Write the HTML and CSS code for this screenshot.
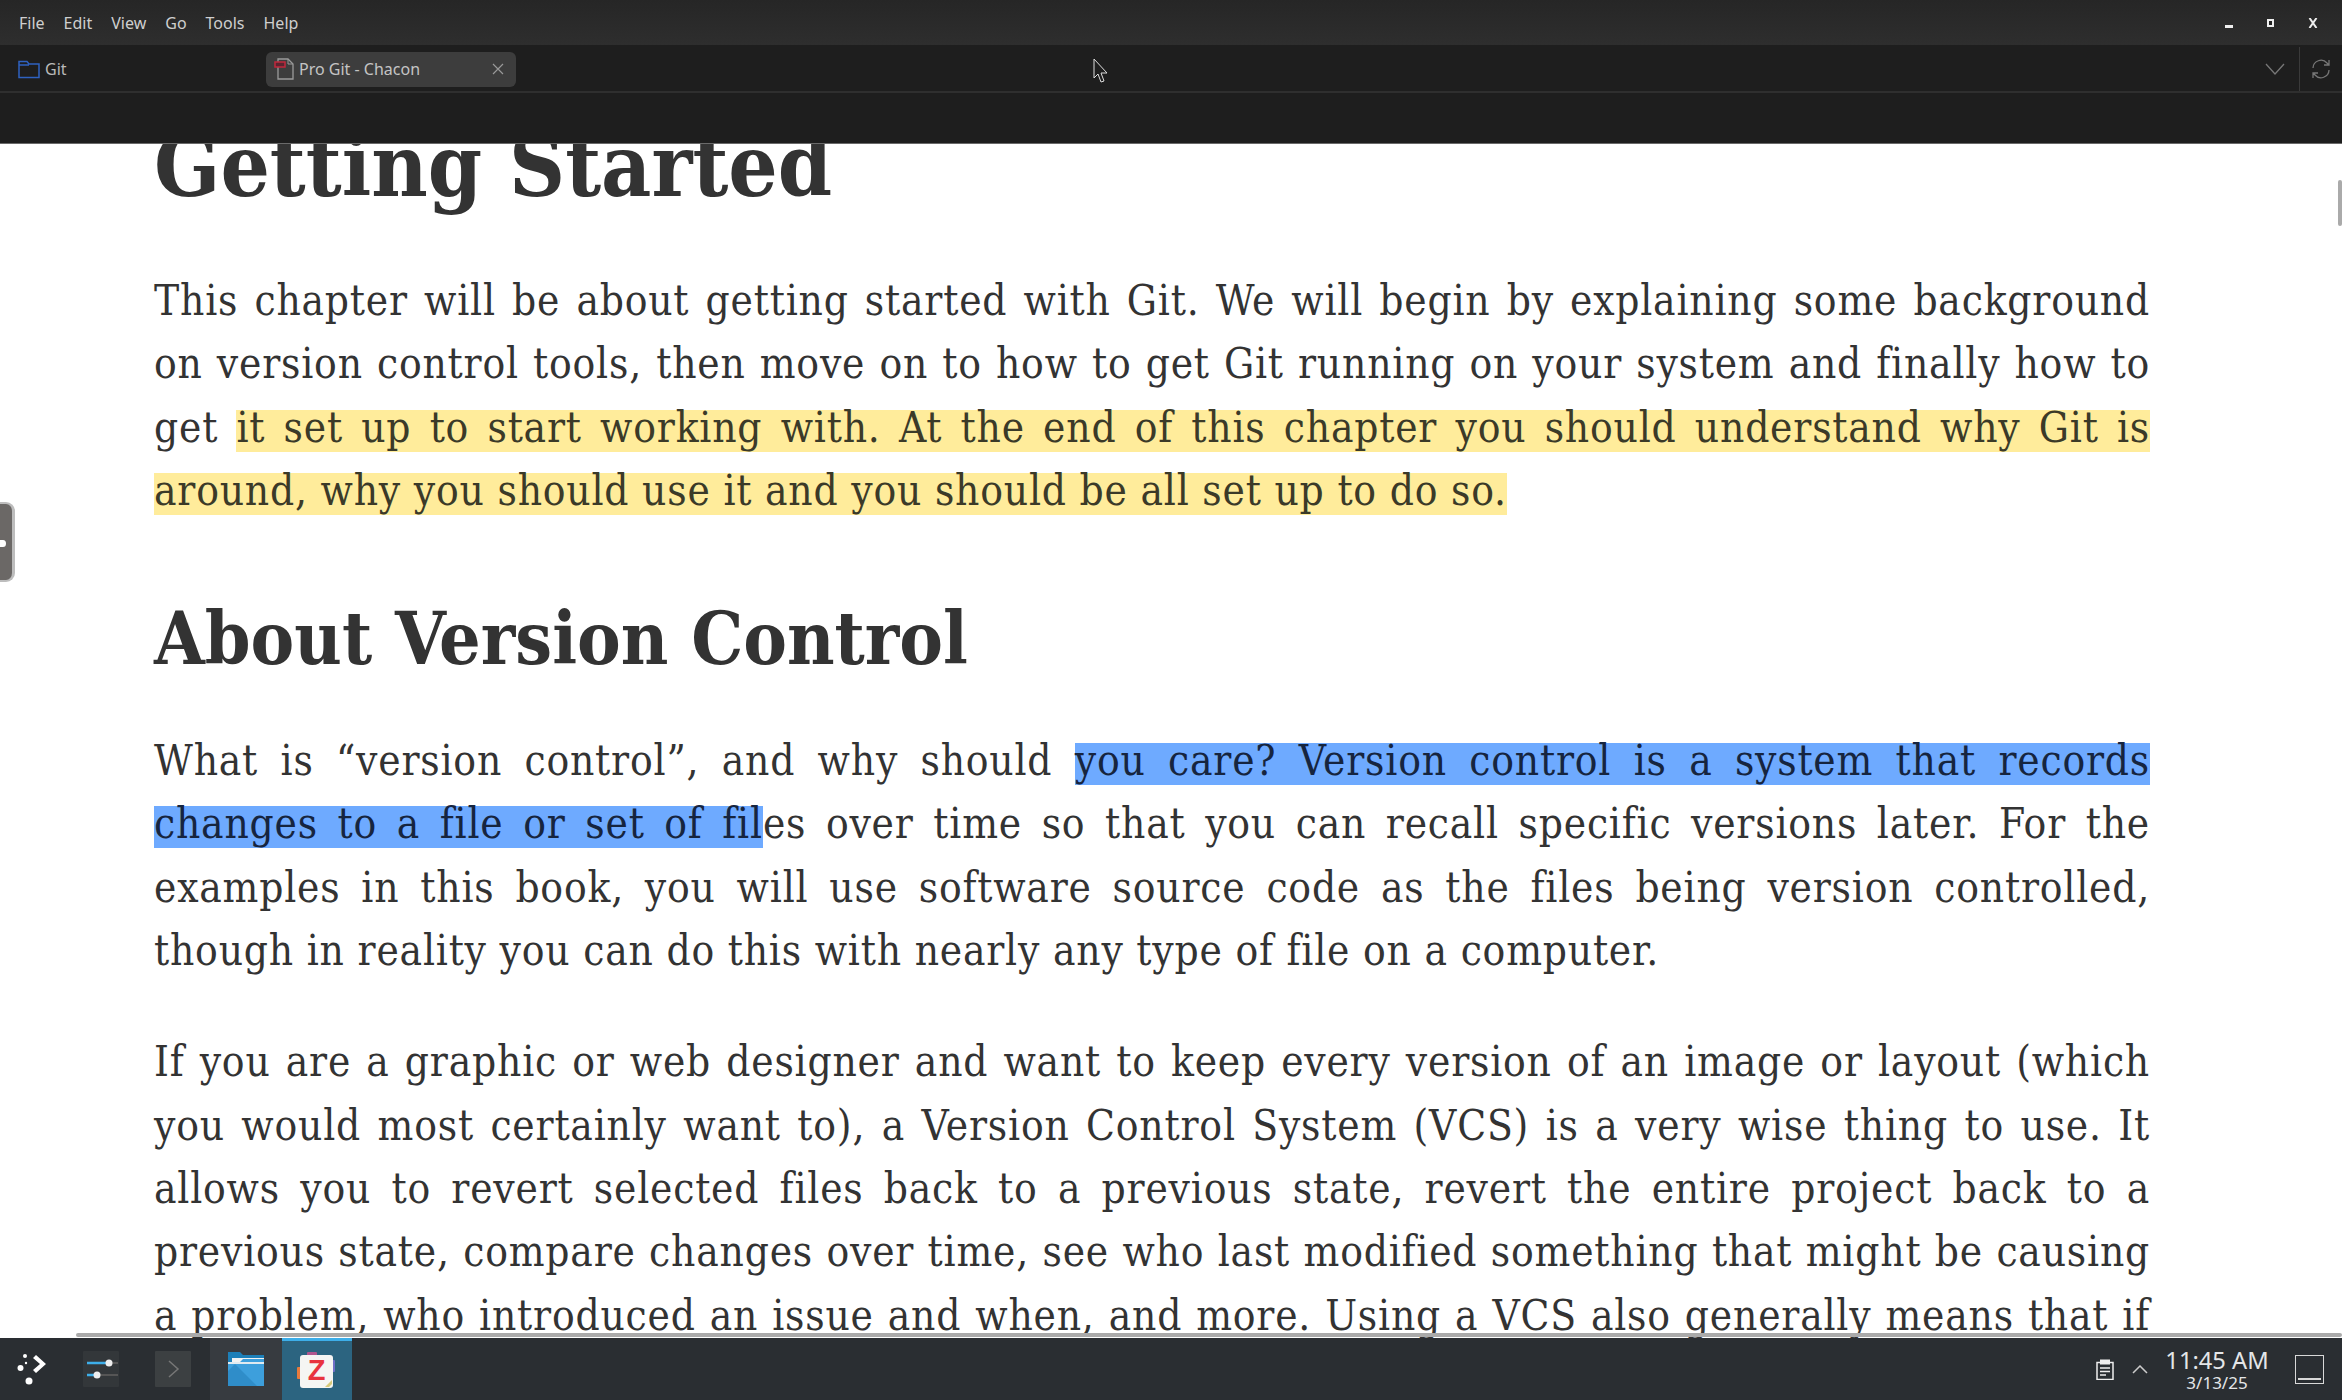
FILE: index.html
```html
<!DOCTYPE html>
<html lang="en">
<head>
    <meta charset="UTF-8">
    <title>Pro Git - Chacon</title>
    <link rel="stylesheet" href="styles.css">
</head>
<body>
    <div class="window">
        <!-- Menu bar -->
        <div class="title-bar">
            <nav class="menu">
                <span>File</span><span>Edit</span><span>View</span><span>Go</span><span>Tools</span><span>Help</span>
            </nav>
            <div class="win-controls">
                <i class="win-min"></i>
                <i class="win-max"></i>
                <svg width="10" height="10" viewBox="0 0 10 10"><path d="M1.5 0l7 10M8.5 0l-7 10" stroke="#eee" stroke-width="2" fill="none"/></svg>
            </div>
        </div>

        <!-- Tabs -->
        <div class="tab-bar">
            <div class="tab tab-library">
                <svg width="22" height="20" viewBox="0 0 22 20"><path d="M1 18.500V2.500h8l2 2.500h10v13.500zM1 6h10" stroke="#2f62c0" stroke-width="1.500" fill="none"/></svg>
                <span>Git</span>
            </div>
            <div class="tab tab-active">
                <svg width="20" height="22" viewBox="0 0 20 22"><path d="M4 1h10l5 5v15H4z" stroke="#9a9a9a" stroke-width="1.300" fill="none"/><path d="M14 1v5h5" stroke="#9a9a9a" fill="none"/><rect x="1" y="4" width="10" height="5" fill="#5a2530" stroke="#c0283c" stroke-width="1.500"/></svg>
                <span class="tab-title">Pro Git - Chacon</span>
                <svg class="tab-close" width="12" height="12" viewBox="0 0 12 12"><path d="M1 1l10 10M11 1L1 11" stroke="#999" stroke-width="1.200"/></svg>
            </div>
            <div class="tab-tools">
                <svg width="20" height="12" viewBox="0 0 20 12"><path d="M1 1l9 10 9-10" stroke="#777" stroke-width="1.300" fill="none"/></svg>
                <div class="tab-sync">
                    <svg width="20" height="20" viewBox="0 0 20 20"><path d="M2 9a8 8 0 0 1 14-5l2 2M18 11a8 8 0 0 1-14 5l-2-2M18 1v5h-5M2 19v-5h5" stroke="#777" stroke-width="1.300" fill="none"/></svg>
                </div>
            </div>
        </div>

        <div class="toolbar"></div>

        <!-- Reader -->
        <main class="reader">
            <article class="page">
                <h1>Getting Started</h1>
                <p>
                    <span class="line">This chapter will be about getting started with Git. We will begin by explaining some background</span>
                    <span class="line">on version control tools, then move on to how to get Git running on your system and finally how to</span>
                    <span class="line">get <mark>it set up to start working with. At the end of this chapter you should understand why Git is</mark></span>
                    <span class="line line-end"><mark>around, why you should use it and you should be all set up to do so.</mark></span>
                </p>
                <h2>About Version Control</h2>
                <p>
                    <span class="line">What is “version control”, and why should <mark class="sel">you care? Version control is a system that records</mark></span>
                    <span class="line"><mark class="sel">changes to a file or set of fil</mark>es over time so that you can recall specific versions later. For the</span>
                    <span class="line">examples in this book, you will use software source code as the files being version controlled,</span>
                    <span class="line line-end">though in reality you can do this with nearly any type of file on a computer.</span>
                </p>
                <p>
                    <span class="line">If you are a graphic or web designer and want to keep every version of an image or layout (which</span>
                    <span class="line">you would most certainly want to), a Version Control System (VCS) is a very wise thing to use. It</span>
                    <span class="line">allows you to revert selected files back to a previous state, revert the entire project back to a</span>
                    <span class="line">previous state, compare changes over time, see who last modified something that might be causing</span>
                    <span class="line">a problem, who introduced an issue and when, and more. Using a VCS also generally means that if</span>
                </p>
            </article>
            <div class="side-handle"><i></i></div>
            <div class="scroll-v"></div>
            <div class="scroll-h"></div>
        </main>

        <!-- Taskbar -->
        <footer class="taskbar">
            <div class="task task-launcher">
                <svg width="32" height="32" viewBox="0 0 32 32" fill="#fff"><circle cx="8" cy="3" r="2"/><circle cx="3.500" cy="15" r="3"/><circle cx="12" cy="28" r="3.500"/><circle cx="9" cy="10" r="1.200"/><path d="M19 2l-3 3 7 6-7 6 3 3 10-9z"/></svg>
            </div>
            <div class="task task-pinned">
                <svg width="36" height="36" viewBox="0 0 36 36"><rect width="36" height="36" rx="1" fill="#33373a"/><path d="M4 12h31M4 24h31" stroke="#555" stroke-width="2"/><path d="M4 12h22M4 24h11" stroke="#3daee9" stroke-width="2.500"/><circle cx="26" cy="12" r="3.500" fill="#eee"/><circle cx="14" cy="24" r="3.500" fill="#eee"/></svg>
            </div>
            <div class="task task-pinned">
                <svg width="36" height="36" viewBox="0 0 36 36"><rect width="36" height="36" rx="1" fill="#3c4042"/><path d="M14 10l9 8-9 8" stroke="#777" stroke-width="1.500" fill="none"/></svg>
            </div>
            <div class="task task-open">
                <svg width="38" height="36" viewBox="0 0 38 36"><path d="M1 1h12l3 3h21v31H1z" fill="#1d7fb8"/><rect x="5" y="7" width="32" height="6" fill="#f2f2f2"/><path d="M1 11h12l3-3h21v27H1z" fill="#3d9fdc"/><path d="M1 11h36v2H1z" fill="#f2f2f2" opacity=".9"/><path d="M8 13l22 22H1V20z" fill="#2f8dc9"/></svg>
            </div>
            <div class="task task-active">
                <svg width="40" height="38" viewBox="0 0 40 38"><rect x="10" y="0" width="10" height="6" rx="1" fill="#b0568e"/><rect x="33" y="8" width="5" height="12" rx="1" fill="#6f6fc8"/><rect x="0" y="15" width="5" height="12" rx="1" fill="#e87a3c"/><rect x="3" y="3" width="33" height="33" rx="3" fill="#f5f5f3"/><text x="19.500" y="28" text-anchor="middle" class="zotero-z">Z</text><path d="M28 35l7-7v4l-3 3z" fill="#d8c97a"/></svg>
            </div>
            <div class="tray">
                <svg width="18" height="21" viewBox="0 0 18 21" fill="none" stroke="#eee" stroke-width="1.500"><path d="M1 3.500h16v17H1z"/><rect x="4" y="0.500" width="10" height="5" fill="#eee" stroke="none"/><path d="M4 9h10M4 12.500h10M4 16h6"/></svg>
                <svg width="16" height="9" viewBox="0 0 16 9"><path d="M1 8l7-7 7 7" stroke="#ccc" stroke-width="1.500" fill="none"/></svg>
                <div class="clock">
                    <span class="clock-time">11:45 AM</span>
                    <span class="clock-date">3/13/25</span>
                </div>
                <div class="show-desktop"></div>
            </div>
        </footer>

        <!-- Mouse pointer -->
        <svg class="pointer" width="18" height="25" viewBox="0 0 18 25"><path d="M1 1v19l4-4 3 8 3-1-3-8h6z" fill="#1e1e1e" stroke="#ddd" stroke-width="1"/></svg>
    </div>
</body>
</html>
```

FILE: styles.css
```css
body {
    margin: 0;
    font-family: "Noto Sans", sans-serif;
    background: #fff;
}

.window {
    height: 100vh;
    display: flex;
    flex-direction: column;
    position: relative;
    overflow: hidden;
}

/* Menu bar */
.title-bar {
    height: 45px;
    flex: none;
    display: flex;
    align-items: center;
    justify-content: space-between;
    background: linear-gradient(#262626, #2e2e2e);
}

.menu {
    display: flex;
    gap: 19px;
    padding: 1px 0 0 19px;
    font-size: 16px;
    color: #cfcfcf;
}

.win-controls {
    display: flex;
    align-items: center;
    gap: 34px;
    padding-right: 24px;
}

.win-min {
    width: 8px;
    height: 3px;
    margin-top: 8px;
    background: #eee;
}

.win-max {
    width: 3px;
    height: 4px;
    border: 2px solid #eee;
    background: #222;
}

/* Tabs */
.tab-bar {
    height: 44px;
    padding-top: 2px;
    flex: none;
    display: flex;
    align-items: center;
    background: #1e1e1e;
    border-bottom: 2px solid #2f2f2f;
    font-size: 16px;
    color: #b9b9b9;
}

.tab {
    height: 35px;
    display: flex;
    align-items: center;
    gap: 5px;
    border-radius: 6px;
}

.tab-library {
    width: 266px;
    padding-left: 18px;
    box-sizing: border-box;
}

.tab-active {
    width: 250px;
    padding: 0 12px 0 8px;
    box-sizing: border-box;
    background: #3d3d3d;
    color: #c4c4c4;
}

.tab-title {
    flex: 1;
}

.tab-tools {
    margin-left: auto;
    height: 100%;
    display: flex;
    align-items: center;
    gap: 14px;
}

.tab-sync {
    height: 100%;
    width: 43px;
    display: flex;
    align-items: center;
    justify-content: center;
    border-left: 1px solid #3a3a3a;
    box-sizing: border-box;
}

.toolbar {
    height: 50px;
    flex: none;
    background: #1e1e1e;
    border-bottom: 1px solid #6a6a6a;
}

/* Reader */
.reader {
    flex: 1;
    min-height: 0;
    position: relative;
    overflow: hidden;
    background: #fff;
}

.page {
    width: 1996px;
    margin: -26px 0 0 154px;
    font-family: "DejaVu Serif Condensed", "Liberation Serif", serif;
    color: #333;
}

h1, h2 {
    margin: 0;
    font-size: 72.800px;
    line-height: 96px;
    font-weight: 700;
}

h1 {
    font-size: 86.400px;
}

h2 {
    margin: 69px 0 42px;
}

p {
    margin: 0 0 47px;
    font-size: 42px;
    line-height: 63.3px;
    letter-spacing: 0.8px;
}

h1 + p {
    margin-top: 55px;
}

p + p {
    margin-top: 48px;
}

.line {
    display: block;
    text-align: justify;
    text-align-last: justify;
}

.line-end {
    text-align-last: left;
}

mark {
    color: #3b3a28;
    background: linear-gradient(#ffec9b, #ffec9b) 0 7px / 100% 43px no-repeat;
}

mark.sel {
    color: #16253f;
    background-image: linear-gradient(#6eaaff, #6eaaff);
}

.side-handle {
    position: absolute;
    left: 0;
    top: 358px;
    width: 12px;
    height: 76px;
    background: #6b6866;
    border: solid #bdbdbd;
    border-width: 2px 3px 2px 0;
    border-radius: 0 9px 9px 0;
    box-sizing: content-box;
}

.side-handle i {
    position: absolute;
    left: 0;
    top: 36px;
    width: 6px;
    height: 7px;
    background: #fff;
    border-radius: 0 50% 50% 0;
}

.scroll-v {
    position: absolute;
    right: 0;
    top: 36px;
    width: 4px;
    height: 46px;
    background: #aaa;
    border-radius: 2px;
}

.scroll-h {
    position: absolute;
    left: 76px;
    right: 0;
    bottom: 1px;
    height: 4px;
    background: #aaa;
    border-radius: 2px;
}

/* Taskbar */
.taskbar {
    height: 62px;
    flex: none;
    display: flex;
    align-items: center;
    background: #2a2e32;
    color: #fcfcfc;
}

.task {
    width: 72px;
    height: 100%;
    display: flex;
    align-items: center;
    justify-content: center;
    flex: none;
    box-sizing: border-box;
}

.task-launcher {
    width: 66px;
}

.task-pinned {
    padding-right: 3px;
}

.task-open {
    background: #373b40;
}

.task-active {
    width: 70px;
    background: #2c6480;
    border-top: 3px solid #3daee9;
}

.zotero-z {
    font-family: "Liberation Sans", sans-serif;
    font-size: 29px;
    font-weight: 700;
    fill: #e8333f;
}

.tray {
    margin-left: auto;
    display: flex;
    align-items: center;
    gap: 18px;
    padding-right: 18px;
}

.clock {
    display: flex;
    flex-direction: column;
    align-items: center;
    width: 102px;
    margin-right: 9px;
    color: #e4e6e8;
    white-space: nowrap;
}

.clock-time {
    font-size: 23.700px;
    line-height: 27px;
}

.clock-date {
    font-size: 17px;
    line-height: 18px;
}

.show-desktop {
    width: 27px;
    height: 27px;
    border: 1px solid #d8d8d8;
    background: linear-gradient(#d8d8d8, #d8d8d8) 50% 22px / 23px 2px no-repeat;
}

.pointer {
    position: absolute;
    left: 1093px;
    top: 58px;
}
```
